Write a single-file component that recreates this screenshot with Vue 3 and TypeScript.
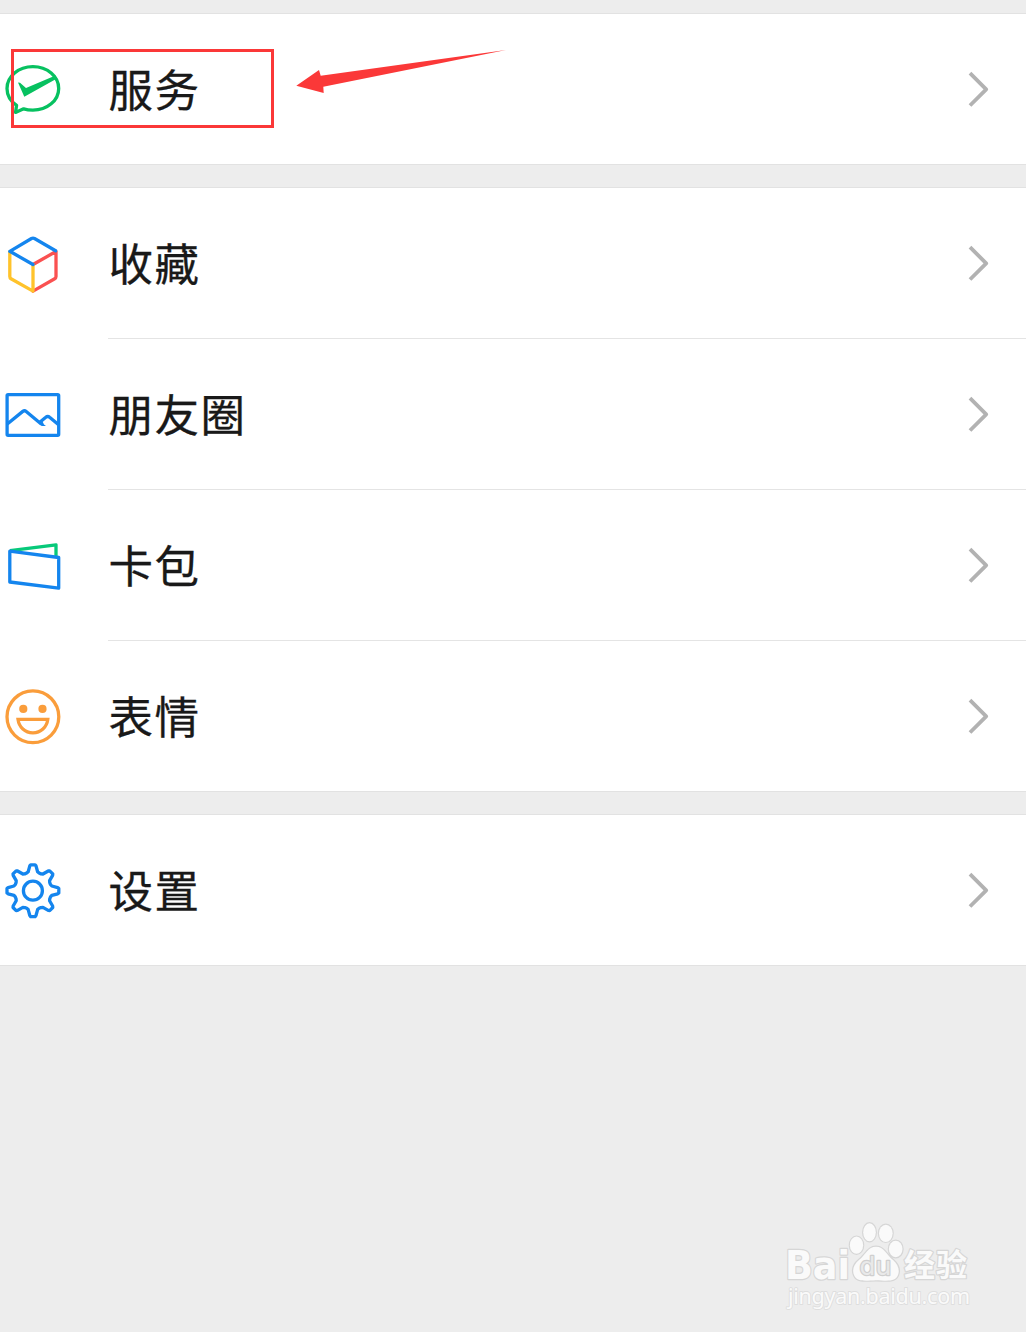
<script setup lang="ts">
type IconName = 'pay' | 'cube' | 'photo' | 'cards' | 'smile' | 'gear'
interface Item {
  label: string
  icon: IconName
  marked?: boolean
}

const groups: Item[][] = [
  [{ label: '服务', icon: 'pay', marked: true }],
  [
    { label: '收藏', icon: 'cube' },
    { label: '朋友圈', icon: 'photo' },
    { label: '卡包', icon: 'cards' },
    { label: '表情', icon: 'smile' },
  ],
  [{ label: '设置', icon: 'gear' }],
]

// Eight teeth around the centre; each tooth is given as [tangential, radial] offsets.
const tooth = [[-6.2, 17.6], [-4.7, 18.9], [-3.1, 24.8], [-2.2, 25.9], [2.2, 25.9], [3.1, 24.8], [4.7, 18.9], [6.2, 17.6]]
const gearPoints = Array.from({ length: 8 }, (_, i) => {
  const a = (i * Math.PI) / 4
  return tooth
    .map(([t, r]) => {
      const x = 32.9 + t * Math.cos(a) + r * Math.sin(a)
      const y = 33.7 + t * Math.sin(a) - r * Math.cos(a)
      return `${x.toFixed(2)},${y.toFixed(2)}`
    })
    .join(' ')
}).join(' ')
</script>

<template>
  <main class="page">
    <section v-for="(group, g) in groups" :key="g" class="group">
      <div v-for="item in group" :key="item.label" class="row">
        <svg class="icon" viewBox="0 0 66 66" fill="none" stroke-width="3.3" stroke-linejoin="round">
          <g v-if="item.icon === 'pay'" stroke="#07c160">
            <path d="M16.6 49.3C10.7 45.3 7 39.2 7 32.4C7 20.3 18.6 10.6 32.9 10.6S58.7 20.3 58.7 32.4S47.2 54.1 32.9 54.1C29.5 54.1 26.5 53.7 23.6 52.8L15.5 56.4Z" />
            <path d="M18 26.4L20 26.8L26 31.9L55.5 19.6L57 22.4L24.3 40.7Z" fill="#07c160" stroke="none" />
          </g>
          <g v-else-if="item.icon === 'cube'" stroke-linecap="round">
            <path d="M56 22V46.5Q56 48 54.7 48.7L33 61.1M33 34.5L56 21.5" stroke="#fa5151" />
            <path d="M33 34.5V61.1L11 48.8Q9.8 48 9.8 46.5V22" stroke="#ffc32b" />
            <path d="M33 34.5L9.8 21.3L31.5 8.5Q33 7.7 34.5 8.5L55.6 20.8" stroke="#1485ee" />
          </g>
          <g v-else-if="item.icon === 'photo'" stroke="#1485ee">
            <rect x="7.1" y="13.6" width="51.6" height="40.7" rx="1" />
            <path d="M7.3 43L22.8 30.4Q24.5 29 26.2 30.4L41.5 43.2M39.5 41.6L45.8 36.3Q47.7 34.6 49.6 36.3L58.3 43.6" />
            <path d="M38 40L42 39.5L44 43.5L46 45H41.5Z" fill="#1485ee" stroke="none" />
          </g>
          <g v-else-if="item.icon === 'cards'">
            <path d="M10 18.6L56 12.8V25" stroke="#07c97a" />
            <path d="M9.8 19.2L58.7 25.5V56.2L9.8 50Z" stroke="#1485ee" />
          </g>
          <g v-else-if="item.icon === 'smile'" stroke="#fa9d3b">
            <circle cx="32.9" cy="33.8" r="25.9" />
            <path d="M18 36.4H47.8C46.8 44.2 40.8 49.9 32.9 49.9S19 44.2 18 36.4Z" stroke-linejoin="miter" />
            <circle cx="23.3" cy="25.9" r="4.1" fill="#fa9d3b" stroke="none" />
            <circle cx="42.5" cy="25.9" r="4.1" fill="#fa9d3b" stroke="none" />
          </g>
          <g v-else stroke="#1485ee">
            <polygon :points="gearPoints" />
            <circle cx="32.9" cy="33.7" r="9.5" />
          </g>
        </svg>
        <div class="cell">
          <span class="label">{{ item.label }}</span>
          <svg class="chevron" viewBox="0 0 22 40" fill="none">
            <path d="M2 4.2L18.2 20.3L2 36.5" stroke="#b2b2b2" stroke-width="3.8" stroke-linejoin="round" />
          </svg>
        </div>
        <template v-if="item.marked">
          <div class="mark"></div>
          <svg class="arrow" viewBox="0 0 212 46">
            <path d="M0.3 37.7L23 22L24.7 27.7L210 2L27.3 38.7L27.7 45Z" fill="#fb3838" />
          </svg>
        </template>
      </div>
    </section>

    <svg class="watermark" viewBox="0 0 200 100">
      <g fill="#fafafa" stroke="#d6d6d6" stroke-width="2.4" paint-order="stroke" stroke-linejoin="round">
        <text class="latin" x="5" y="69" font-size="39.5" textLength="65" lengthAdjust="spacingAndGlyphs">Bai</text>
        <ellipse cx="76.5" cy="35.2" rx="6.6" ry="8.6" />
        <ellipse cx="89.5" cy="22.3" rx="6.3" ry="9" />
        <ellipse cx="105.8" cy="23.3" rx="6.8" ry="8.6" />
        <ellipse cx="115.7" cy="39" rx="6.8" ry="8.3" />
        <path d="M96 36.8C88 36.8 85.5 45 79 50C73.5 54.5 72 60 74 65C76.5 71.5 83 71 96 70.2C109 71 115.5 71.5 118 65C120 60 118 54.5 113 50C106.5 45 104 36.8 96 36.8Z" />
        <text class="du" x="79.5" y="65" font-size="25" fill="#e9e9e9" stroke="#cfcfcf" textLength="32" lengthAdjust="spacingAndGlyphs">du</text>
        <text class="cjk" x="124" y="66" font-size="31" textLength="63">经验</text>
        <text class="url" x="8" y="93.5" font-size="21.5" stroke-width="1.8" stroke="#dedede" textLength="182">jingyan.baidu.com</text>
      </g>
    </svg>
  </main>
</template>

<style>
body {
  margin: 0;
  background: #ededed;
}
</style>

<style scoped>
.page {
  box-sizing: border-box;
  position: relative;
  display: flex;
  flex-direction: column;
  gap: 22px;
  height: 1332px;
  padding-top: 13px;
  overflow: hidden;
  background: #ededed;
  font-family: "Noto Sans CJK SC", sans-serif;
}
.group {
  background: #fff;
  border-top: 1px solid #e2e2e2;
  border-bottom: 1px solid #e2e2e2;
}
.row {
  position: relative;
  display: flex;
  align-items: center;
  height: 150px;
}
.row + .row {
  height: 151px;
}
.icon {
  flex: none;
  width: 66px;
  height: 66px;
  margin-right: 42px;
}
.cell {
  box-sizing: border-box;
  flex: 1;
  display: flex;
  align-items: center;
  justify-content: space-between;
  height: 100%;
  padding-right: 36px;
}
.row + .row .cell {
  border-top: 1px solid #e4e4e4;
}
.row + .row .icon {
  margin-top: 1px;
}
.label {
  padding-left: 0.5px;
  padding-bottom: 2px;
  color: #191919;
  font-size: 44.5px;
  line-height: 66px;
  letter-spacing: 1.5px;
  -webkit-text-stroke: 0.3px #191919;
}
.chevron {
  width: 22px;
  height: 40px;
}
.mark {
  position: absolute;
  box-sizing: border-box;
  left: 11px;
  top: 35px;
  width: 263px;
  height: 79px;
  border: 3px solid #fb3838;
}
.arrow {
  position: absolute;
  left: 296px;
  top: 34px;
  width: 212px;
  height: 46px;
}
.watermark {
  position: absolute;
  left: 780px;
  top: 1210px;
  width: 200px;
  height: 100px;
}
.latin {
  font-family: "DejaVu Sans", sans-serif;
  font-weight: 700;
}
.du {
  font-family: "DejaVu Sans", sans-serif;
}
.cjk {
  font-family: "Noto Sans CJK SC", sans-serif;
  font-weight: 700;
}
.url {
  font-family: "Noto Sans", sans-serif;
}
</style>
